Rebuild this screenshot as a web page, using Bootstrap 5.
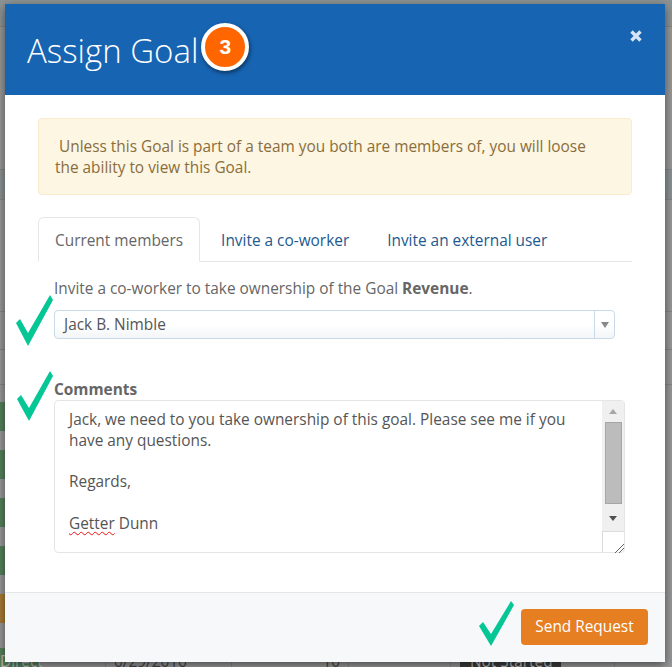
<!DOCTYPE html>
<html lang="en">
<head>
    <meta charset="UTF-8">
    <meta name="viewport" content="width=device-width, initial-scale=1.0">
    <title>Assign Goal</title>
    <link rel="stylesheet" href="https://cdn.jsdelivr.net/npm/bootstrap@5.3.0/dist/css/bootstrap.min.css">
    <style>
        html, body { height: 667px; overflow: hidden; }
        body { position: relative; background: #979797; font-family: "Open Sans", sans-serif; font-size: 15.4px; color: #666; }

        /* page dimmed behind the modal */
        .behind { position: absolute; inset: 0; color: #444; }
        .behind-row { border-bottom: 1px solid #858585; }
        .behind-top { height: 27px; background: #8d9393; }
        .behind-plain { height: 143px; }
        .behind-head { height: 30px; background: #8b9192; }
        .behind-gap { height: 112px; }
        .behind-s { height: 38px; }
        .behind-m { height: 35px; }
        .behind-tagrow { height: 48px; padding-top: 17px; border: 0; }
        .behind-tag { display: block; width: 40px; height: 29px; background: #56805a; }
        .behind-tag.late { background: #a87a35; }
        .behind-last { position: absolute; left: 0; right: 0; top: 648px; height: 19px; display: flex; font-size: 15.4px; line-height: 24px; }
        .behind-last > div { border-right: 1px solid #858585; }
        .last-cell { padding-top: 2px; }
        .last-tag { display: block; width: 40px; height: 19px; padding: 2px 9px 0 0; background: #56805a; color: #bbb; text-align: right; }
        .last-status { display: inline-block; width: 101px; margin-left: 9px; padding-left: 10px; background: #3c3c3c; color: #bbb; white-space: nowrap; }

        .dialog { position: absolute; left: 5px; top: 4px; width: 660px; height: 658px; background: #fff; border: 0; border-radius: 0; box-shadow: 0 3px 9px rgba(0,0,0,.5); }
        .dialog .modal-header { height: 91px; padding: 0 22px; background: #1764b3; border: 0; border-radius: 0; align-items: flex-start; }
        .dialog .modal-title { font-size: 33px; font-weight: 300; line-height: 1; color: #fff; margin-top: 30px; }
        .step-no { width: 48px; height: 48px; margin: 19px 0 0 3px; border: 4px solid #fff; border-radius: 50%; background: #f60; color: #fff; font: 700 21px/39px "Liberation Sans", sans-serif; text-align: center; box-shadow: 1px 2px 4px rgba(0,0,0,.5); }
        .close-x { margin: 26px 1px 0 auto; padding: 0; border: 0; background: none; line-height: 0; }

        .dialog .modal-body { padding: 23px 33px 0; }
        .warn-box { height: 77px; margin: 0; padding: 17px 40px 17px 16px; background: #fcf6e3; border: 1px solid #faebcc; border-radius: 4px; color: #8a6d3b; line-height: 21px; }
        .goal-tabs { margin-top: 22px; border-color: #e4e6e8; }
        .goal-tabs .nav-link { height: 45px; padding: 13px 16px; margin-right: 4px; line-height: 19px; color: #22598f; }
        .goal-tabs .nav-link.active { color: #666; border-color: #e4e6e8 #e4e6e8 #fff; }
        .goal-pane { padding-left: 16px; }
        .goal-pane p { margin: 17px 0 0; line-height: 20px; }
        .who-select { width: 561px; height: 29px; margin-top: 11px; background: linear-gradient(#fff 50%, #f3f5f7); border: 1px solid #c9dbea; border-radius: 4px; color: #555; line-height: 28px; }
        .who-select span { padding-left: 9px; }
        .who-arrow { width: 20px; border-left: 1px solid #c9dbea; }
        .comment-label { margin: 41px 0 0; font-weight: 700; line-height: 20px; display: block; }
        .comment-box { width: 571px; height: 153px; border: 1px solid #e3e5e7; border-radius: 4px; color: #555; }
        .comment-text { padding: 9px 14px; line-height: 20.8px; }
        .typo { text-decoration: underline wavy #e11; text-decoration-thickness: 1px; text-underline-offset: 2px; }
        .fake-scroll { width: 22px; flex: none; }
        .fake-track { height: 130px; background: #f0f0f0; }
        .fake-thumb { width: 17px; height: 82px; background: #bcbcbc; border: 1px solid #a6a6a6; }
        .arrow-down { margin-top: 12px; }
        .fake-grip { height: 22px; border-top: 1px solid #dcdcdc; border-left: 1px solid #dcdcdc; }

        .dialog .modal-footer { height: 70px; margin-top: auto; padding: 0 17px 2px 0; background: #f7f8fa; border-top: 1px solid #e5e5e5; border-radius: 0; }
        .send-btn { width: 127px; height: 36px; margin: 0; padding: 1px 0 0; background: #e67e22; border: 0; border-radius: 4px; color: #fff; font-size: 15.4px; }
        .tick { position: absolute; fill: #05c796; }
    </style>
</head>
<body>
    <!-- page behind the modal -->
    <div class="behind">
        <div class="behind-row behind-top"></div>
        <div class="behind-row behind-plain"></div>
        <div class="behind-row behind-head"></div>
        <div class="behind-row behind-gap"></div>
        <div class="behind-row behind-s"></div>
        <div class="behind-row behind-m"></div>
        <div class="behind-row behind-tagrow"><span class="behind-tag"></span></div>
        <div class="behind-row behind-tagrow"><span class="behind-tag"></span></div>
        <div class="behind-row behind-tagrow"><span class="behind-tag"></span></div>
        <div class="behind-row behind-tagrow"><span class="behind-tag"></span></div>
        <div class="behind-row behind-tagrow"><span class="behind-tag late"></span></div>
        <div class="behind-last">
            <div style="width:106px"><span class="last-tag">Direct</span></div>
            <div class="ps-2 last-cell" style="width:126px">0/29/2016</div>
            <div class="text-end pe-2 last-cell" style="width:117px">10</div>
            <div style="width:102px"></div>
            <div style="width:164px"><span class="last-status last-cell">Not Started</span></div>
        </div>
    </div>

    <div class="modal-content dialog">
        <div class="modal-header">
            <h4 class="modal-title">Assign Goal</h4>
            <div class="step-no">3</div>
            <button type="button" class="close-x" aria-label="Close">
                <svg width="12" height="12" viewBox="0 0 12 12"><path d="M1.5 1.5 10.5 10.5M10.5 1.5 1.5 10.5" stroke="#d6e4f3" stroke-width="3.4"/></svg>
            </button>
        </div>
        <div class="modal-body">
            <div class="alert warn-box">&nbsp;Unless this Goal is part of a team you both are members of, you will loose the ability to view this Goal.</div>
            <ul class="nav nav-tabs goal-tabs">
                <li class="nav-item"><a class="nav-link active" href="#">Current members</a></li>
                <li class="nav-item"><a class="nav-link" href="#">Invite a co-worker</a></li>
                <li class="nav-item"><a class="nav-link" href="#">Invite an external user</a></li>
            </ul>
            <div class="goal-pane">
                <p>Invite a co-worker to take ownership of the Goal <strong>Revenue</strong>.</p>
                <div class="who-select d-flex justify-content-between">
                    <span>Jack B. Nimble</span>
                    <div class="who-arrow d-flex align-items-center justify-content-center">
                        <svg width="8" height="6" viewBox="0 0 8 6"><path d="M0 0H8L4 6Z" fill="#888"/></svg>
                    </div>
                </div>
                <label class="comment-label">Comments</label>
                <div class="comment-box d-flex justify-content-between">
                    <div class="comment-text">Jack, we need to you take ownership of this goal. Please see me if you have any questions.<br><br>Regards,<br><br><span class="typo">Getter</span> Dunn</div>
                    <div class="fake-scroll">
                        <div class="fake-track d-flex flex-column align-items-center">
                            <svg class="my-2 flex-none" width="8" height="5" viewBox="0 0 8 5"><path d="M0 5H8L4 0Z" fill="#a6a6a6"/></svg>
                            <div class="fake-thumb"></div>
                            <svg class="arrow-down" width="8" height="5" viewBox="0 0 8 5"><path d="M0 0H8L4 5Z" fill="#505050"/></svg>
                        </div>
                        <div class="fake-grip d-flex align-items-end justify-content-end">
                            <svg width="9" height="9" viewBox="0 0 9 9"><path d="M0 9 9 0M4 9 9 4" stroke="#666" stroke-width="1" fill="none"/></svg>
                        </div>
                    </div>
                </div>
            </div>
        </div>
        <div class="modal-footer">
            <button type="button" class="btn send-btn">Send Request</button>
        </div>
    </div>

    <!-- annotation ticks, drawn over the modal -->
    <svg class="tick" style="left:15px;top:294px" width="39" height="53" viewBox="0 0 39 53"><path d="M1 29 5 25 13 39 35 1 38 6 13 52Z"/></svg>
    <svg class="tick" style="left:16px;top:370px" width="38" height="52" viewBox="0 0 38 52"><path d="M1 29 5 25 13 38 34 1 37 6 13 51Z"/></svg>
    <svg class="tick" style="left:478px;top:600px" width="38" height="47" viewBox="0 0 38 47"><path d="M1 26 5 22 13 34 33 1 36 5 13 46Z"/></svg>
    <script src="https://cdn.jsdelivr.net/npm/bootstrap@5.3.0/dist/js/bootstrap.bundle.min.js"></script>
</body>
</html>
